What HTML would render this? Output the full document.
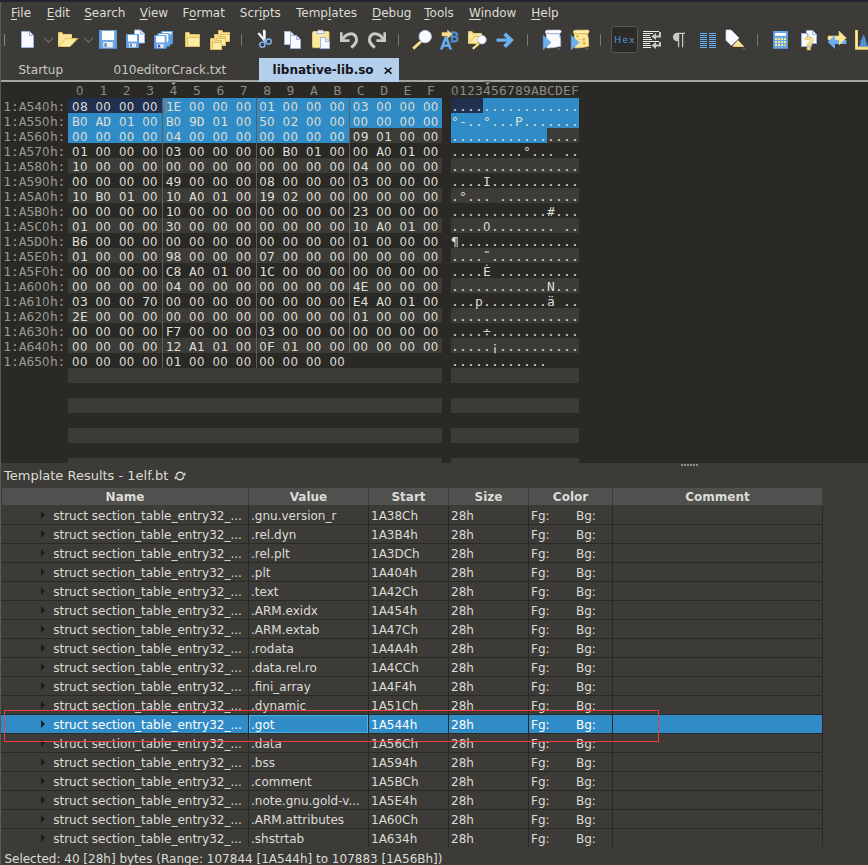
<!DOCTYPE html>
<html lang="en">
<head>
<meta charset="utf-8">
<title>010 Editor - libnative-lib.so</title>
<style>
html,body{margin:0;padding:0;}
body{width:868px;height:865px;overflow:hidden;background:#3c3b37;position:relative;
 font-family:"DejaVu Sans","Liberation Sans",sans-serif;font-size:12px;color:#dcdcd6;}
*{box-sizing:border-box;}
.abs{position:absolute;}
#topstrip{position:absolute;left:0;top:0;width:868px;height:2px;background:#22252f;}
#leftb{position:absolute;left:0;top:2px;width:1px;height:863px;background:#5c5b58;}
/* menu */
#menu{position:absolute;left:0;top:2px;height:22px;white-space:nowrap;}
#menu span{position:absolute;top:0;line-height:22px;height:22px;color:#dddcd6;}
#menu u{text-decoration:underline;text-underline-offset:2px;text-decoration-thickness:1px;}
/* toolbar */
#tb{position:absolute;left:0;top:25px;width:868px;height:30px;}
#tb svg{position:absolute;overflow:visible;}
.sep{position:absolute;top:9px;width:1px;height:13px;background:#6a6966;}
/* tabs */
#tabs{position:absolute;left:0;top:58px;width:868px;height:24px;}
.tab{position:absolute;top:0;height:24px;line-height:24px;color:#c9c8c2;white-space:nowrap;}
#tabline{position:absolute;left:1px;top:80px;width:867px;height:2px;background:#a6a6a5;}
#acttab{position:absolute;left:259px;top:58px;width:140px;height:24px;background:#b4cfec;color:#15151a;font-weight:bold;}
#acttab span{position:absolute;left:13.6px;top:0;line-height:24px;}
#acttab svg{position:absolute;left:125px;top:9px;}
/* hex */
#hexbg{position:absolute;left:1px;top:82px;width:867px;height:381px;background:#2a2926;}
.stripe{position:absolute;height:15px;background:#3c3b37;}
.mono{font-family:"DejaVu Sans Mono","Liberation Mono",monospace;font-size:13px;}
.addr,.hx,.as,.hh{position:absolute;height:15px;line-height:15px;white-space:pre;font-family:"DejaVu Sans Mono","Liberation Mono",monospace;font-size:13px;}
.addr{left:3.3px;color:#9a9a92;line-height:17px;letter-spacing:-0.08px;}
.hx{left:72.1px;color:#deddd5;word-spacing:-0.08px;line-height:17px;}
.as{left:451.1px;color:#deddd5;letter-spacing:0.17px;line-height:17px;}
.hx i{display:inline-block;width:23.4px;font-style:normal;}
.addr b,.hx b,.hh b,.as b{font-weight:normal;font-family:"DejaVu Sans Condensed","DejaVu Sans Mono","Liberation Mono",monospace;letter-spacing:0.39px;}
.as b{letter-spacing:0.56px !important;}
.hh{top:83px;color:#8c8b80;line-height:15px !important;}
.vs{position:absolute;top:98px;width:1px;background:#5e5d5a;height:270px;}
.selb{position:absolute;background:#308cc6;height:15px;}
.navy{position:absolute;background:#22304f;height:15px;}
/* template results */
#tr{position:absolute;left:4px;top:467px;font-size:13px;line-height:18px;color:#dcdbd5;white-space:nowrap;}
#th{position:absolute;left:2px;top:488px;width:820px;height:17px;background:#50504e;}
#th span{position:absolute;top:0;height:17px;line-height:19px;text-align:center;font-weight:bold;color:#dcdbd5;}
#th i{position:absolute;top:0;width:1px;height:17px;background:#3c3b37;}
.tr{position:absolute;left:1px;width:821px;height:19px;border-bottom:1px solid #2a2926;}
.tr.last{border-bottom:none;height:18px;overflow:hidden;}
.tr.sel{background:#308cc6;}
.tr .c{position:absolute;top:0;height:19px;line-height:20px;white-space:nowrap;color:#dddcd6;}
.tr.sel .c{color:#fff;}
.c.n{left:52.2px;} .c.v{left:250px;} .c.s{left:370px;} .c.z{left:450px;} .c.f{left:530px;} .c.b{left:575px;}
.ar{position:absolute;left:40px;top:5px;width:0;height:0;border-left:4px solid #1c1c1a;border-top:4px solid transparent;border-bottom:4px solid transparent;}
.vl{position:absolute;top:506px;width:1px;height:341px;background:#2a2926;}
#status{position:absolute;left:4.4px;top:851px;line-height:16px;color:#dcdbd5;white-space:nowrap;}
#redbox{position:absolute;left:4px;top:710px;width:655px;height:32px;border:1px solid #f03c3c;}
</style>
</head>
<body>
<div id="topstrip"></div>
<div id="leftb"></div>
<div id="menu"><span style="left:11px"><u>F</u>ile</span><span style="left:46.8px"><u>E</u>dit</span><span style="left:84.2px"><u>S</u>earch</span><span style="left:139.7px"><u>V</u>iew</span><span style="left:182.6px">F<u>o</u>rmat</span><span style="left:239.8px">Scr<u>i</u>pts</span><span style="left:296px">Temp<u>l</u>ates</span><span style="left:371.9px"><u>D</u>ebug</span><span style="left:424.3px"><u>T</u>ools</span><span style="left:469.1px"><u>W</u>indow</span><span style="left:531.3px"><u>H</u>elp</span></div>
<div id="tb">
<svg style="left:0;top:0" width="868" height="30" viewBox="0 25 868 30">
<defs>
<g id="doc"><path d="M0.5 0.5 H8.5 L12.5 4.5 V16.5 H0.5 Z" fill="#f8faff" stroke="#9db2df" stroke-width="1"/><path d="M8.5 0.5 V4.5 H12.5" fill="#dfe7fa" stroke="#9db2df" stroke-width="1"/></g>
<g id="sdoc"><path d="M0.5 0.5 H6.5 L10.5 4.5 V13.5 H0.5 Z" fill="#f8faff" stroke="#9db2df" stroke-width="1"/><path d="M6.5 0.5 V4.5 H10.5" fill="#e3eafb" stroke="#9db2df" stroke-width="1"/></g>
<g id="chev"><path d="M0.5 0.5 L5 5 L9.5 0.5" fill="none" stroke="#73726f" stroke-width="1.1"/></g>
<g id="floppy"><rect x="0" y="0" width="13" height="14" rx="1.2" fill="#6ba6e6"/><rect x="0" y="0" width="1.2" height="14" fill="#5a97dc"/><rect x="11.8" y="0" width="1.2" height="14" fill="#5a97dc"/><rect x="2" y="1" width="9" height="6.5" fill="#ffffff"/><rect x="3" y="9.5" width="7" height="3.7" fill="#ece8e4"/><rect x="4" y="10.2" width="2" height="2.5" fill="#4a80d8"/></g>
<g id="sfold"><path d="M0.5 11.5 V0.5 H4 L5 2.5 H11.5 V11.5 Z" fill="#f6df8c" stroke="#e3be5c" stroke-width="1"/><rect x="2.5" y="4.5" width="9" height="7" fill="#faedaa" stroke="#e3be5c" stroke-width="1"/></g>
<g id="dd"><path d="M0 0 H4.2 L2.1 1.7 Z" fill="#64635f"/></g>
</defs>
<!-- handle -->
<rect x="4" y="34" width="1" height="12" fill="#8b8a88"/>
<!-- new -->
<use href="#doc" x="21" y="31"/>
<use href="#chev" x="43.6" y="37.2"/>
<!-- open folder -->
<path d="M58.5 46.5 V32.5 H62 L63.2 34.5 H71.5 V38" fill="#f6df8c" stroke="#e3be5c" stroke-width="1"/>
<path d="M58.5 46.5 V34.5 H71.5 V38.5 H66 Z" fill="#f8e596"/>
<path d="M58.5 46.5 L66 38.5 H77.8 L70 46.5 Z" fill="#faeba4" stroke="#e3be5c" stroke-width="1" stroke-linejoin="round"/>
<use href="#chev" x="83.5" y="37.2"/>
<!-- save -->
<rect x="99" y="30" width="18" height="18.8" rx="1.5" fill="#6ba6e6"/>
<rect x="99" y="30" width="1.5" height="18.8" fill="#5a97dc"/><rect x="115.5" y="30" width="1.5" height="18.8" fill="#5a97dc"/>
<rect x="102" y="31" width="12.2" height="9" fill="#ffffff"/>
<rect x="103.2" y="42" width="9.6" height="5.5" fill="#eeeae6"/>
<rect x="104.3" y="43" width="2.5" height="4" fill="#5b97e0"/>
<!-- save as -->
<use href="#sdoc" x="134" y="29.5"/>
<use href="#floppy" x="126" y="34"/>
<!-- save all -->
<g><rect x="161" y="31" width="12" height="13" rx="1" fill="#6ba6e6"/><rect x="162.5" y="32" width="9" height="8" fill="#fff"/>
<rect x="157.5" y="33" width="12.5" height="13.5" rx="1" fill="#6ba6e6"/><rect x="159" y="34" width="9.2" height="8" fill="#fff"/><path d="M167 47.5 L173 43 V33 L170 35 V46 Z" fill="#5a97dc"/>
<g transform="translate(154.2,35)"><rect x="0" y="0" width="12.5" height="13.7" rx="1.2" fill="#6ba6e6"/><rect x="0" y="0" width="1.2" height="13.7" fill="#5a97dc"/><rect x="2" y="1" width="8.5" height="6.5" fill="#ffffff"/><rect x="3" y="9.2" width="6.5" height="3.5" fill="#ece8e4"/><rect x="3.8" y="9.8" width="2.2" height="2.5" fill="#3a50d0"/></g></g>
<!-- closed folder -->
<path d="M185.5 46.5 V32.5 H189 L190 34.5 H199.5 V46.5 Z" fill="#f6df8c" stroke="#e3be5c" stroke-width="1"/>
<rect x="187.5" y="37.5" width="12" height="9" fill="#faedaa" stroke="#e3be5c" stroke-width="1"/>
<!-- multi folder -->
<use href="#sfold" x="218" y="30"/>
<use href="#sfold" x="214" y="34"/>
<use href="#sfold" x="210" y="38"/>
<rect x="241" y="34" width="1" height="12" fill="#7b7a78"/>
<!-- scissors -->
<path d="M257.3 33.6 L259.6 32.6 L266.4 41 L264.6 42.3 Z" fill="#f4f7ff"/>
<path d="M262.8 30.2 L264.5 29.5 L265.8 31 L265.6 41 L263.4 41 Z" fill="#f4f7ff"/>
<path d="M263.6 39 L266.5 39.5 L267.2 42 L264.5 42.6 Z" fill="#9db6dc"/>
<circle cx="262.4" cy="44.7" r="2.6" fill="none" stroke="#7db8f0" stroke-width="1.4"/>
<circle cx="268.7" cy="41.6" r="2.6" fill="none" stroke="#7db8f0" stroke-width="1.4"/>
<!-- copy -->
<use href="#sdoc" x="284" y="31"/>
<use href="#sdoc" x="290" y="35"/>
<!-- paste -->
<rect x="312.5" y="31.5" width="16.5" height="16.2" rx="1.2" fill="#f9e9a0" stroke="#e9c868" stroke-width="1"/>
<path d="M316.5 33.5 L318 30.3 H323 L324.5 33.5 Z" fill="#f4f7ff" stroke="#9db2df" stroke-width="0.9"/>
<g transform="translate(320,37)"><path d="M0.5 0.5 H5.5 L9.5 4.5 V11.6 H0.5 Z" fill="#f8faff" stroke="#9db2df" stroke-width="1"/><path d="M5.5 0.5 V4.5 H9.5" fill="#e3eafb" stroke="#9db2df" stroke-width="1"/></g>
<!-- undo -->
<path d="M341.3 32.3 V40.6 H349.6" fill="none" stroke="#c9c9c7" stroke-width="2.6"/>
<path d="M342.5 39.5 C346 33 353.5 32 356 37 C357.8 41 354.5 45 351.2 47.6" fill="none" stroke="#c9c9c7" stroke-width="3"/>
<!-- redo -->
<path d="M384.7 32.3 V40.6 H376.4" fill="none" stroke="#c9c9c7" stroke-width="2.6"/>
<path d="M383.5 39.5 C380 33 372.5 32 370 37 C368.2 41 371.5 45 374.8 47.6" fill="none" stroke="#c9c9c7" stroke-width="3"/>
<rect x="398" y="34" width="1" height="12" fill="#7b7a78"/>
<!-- find -->
<path d="M413.2 48.6 L421 41.5" stroke="#f7df88" stroke-width="2.8" stroke-linecap="butt"/>
<circle cx="425.2" cy="36.6" r="6.2" fill="#fafbff" stroke="#b9c8ea" stroke-width="1"/>
<!-- replace -->
<text x="440.6" y="48.9" font-family="'DejaVu Sans','Liberation Sans',sans-serif" font-size="16.2" fill="#6bb0f0" stroke="#6bb0f0" stroke-width="0.8">A</text>
<text x="450.1" y="41.8" font-family="'DejaVu Sans','Liberation Sans',sans-serif" font-size="13.2" fill="#4f8fd0" stroke="#4f8fd0" stroke-width="0.8">B</text>
<path d="M442 32.6 H447.5 V30 L452.2 34.3 L447.5 38.6 V36 H442 Z" fill="#f9e08a" stroke="#e9c868" stroke-width="0.5"/>
<!-- find in files -->
<path d="M468.5 43.5 V31.5 H472 L473.2 33.5 H481.5 V36" fill="#f6df8c" stroke="#e3be5c" stroke-width="1"/>
<path d="M468.5 43.5 V33.5 H481.5 V37 H475 Z" fill="#f8e596"/>
<path d="M468.5 43.5 L474.5 36.5 H483 L477 43.5 Z" fill="#faeba4" stroke="#e3be5c" stroke-width="1" stroke-linejoin="round"/>
<path d="M472.8 48.8 L479 43.4" stroke="#f7df88" stroke-width="2.2"/>
<circle cx="482" cy="39.7" r="4.2" fill="#fafbff" stroke="#b9c8ea" stroke-width="1"/>
<!-- goto -->
<path d="M497.8 40.1 H510" stroke="#6bb0f0" stroke-width="3.2" stroke-linecap="round"/>
<path d="M504.6 33.8 L511.2 40.1 L504.6 46.6" fill="none" stroke="#6bb0f0" stroke-width="3.8" stroke-linejoin="miter"/>
<rect x="527" y="34" width="1" height="12" fill="#7b7a78"/>
<!-- run script -->
<g id="scrollw">
<path d="M546.5 33 L546.3 40 Q546.2 45 546.9 48 Q553.5 47.9 560.6 46.3 Q561 40 559.4 33.3 Z" fill="#fafbff" stroke="#c3cfec" stroke-width="0.7"/>
<path d="M547 30.2 Q545.3 30.4 545.3 32 Q545.4 33.7 547.2 33.7 L559.4 33.7 Q560.6 33.3 561.3 31.2 Q560.6 30.1 559.4 30.1 Z" fill="#ffffff" stroke="#d5def4" stroke-width="0.6"/>
<path d="M547.3 32 Q547.5 33.6 549 33.7 L559.4 33.7" fill="none" stroke="#8fa6d6" stroke-width="0.9"/>
<path d="M559.6 34 Q561 40 560.6 46" fill="none" stroke="#9fb3e0" stroke-width="0.8"/>
</g>
<path d="M543.1 35 L551 42.5 L543.1 50.1 Z" fill="#6cb0ee" stroke="#4f8fd4" stroke-width="0.5"/>
<use href="#dd" x="556.8" y="48.2"/>
<!-- run template -->
<g>
<path d="M574.5 33 L574.3 40 Q574.2 45 574.9 48 Q581.5 47.9 588.6 46.3 Q589 40 587.4 33.3 Z" fill="#fbeaa2" stroke="#ecc968" stroke-width="0.8"/>
<path d="M575 30.2 Q573.3 30.4 573.3 32 Q573.4 33.7 575.2 33.7 L587.4 33.7 Q588.6 33.3 589.3 31.2 Q588.6 30.1 587.4 30.1 Z" fill="#fdf0b6" stroke="#ecc968" stroke-width="0.7"/>
<path d="M575.3 32 Q575.5 33.6 577 33.7 L587.4 33.7" fill="none" stroke="#e3b94e" stroke-width="0.9"/>
</g>
<g fill="#e5b040"><circle cx="577.3" cy="36.3" r="1.25"/><circle cx="583.7" cy="39.4" r="1.35"/><circle cx="584.4" cy="43.2" r="1.35"/><circle cx="578.8" cy="39.4" r="0.5"/><circle cx="580.6" cy="39.4" r="0.5"/><circle cx="579.8" cy="41.4" r="0.5"/><circle cx="580.8" cy="43.3" r="0.5"/><circle cx="582.2" cy="43.3" r="0.5"/></g>
<path d="M571.1 35 L579 42.5 L571.1 50.1 Z" fill="#6cb0ee" stroke="#4f8fd4" stroke-width="0.5"/>
<use href="#dd" x="584.8" y="48.2"/>
<rect x="600" y="34" width="1" height="12" fill="#7b7a78"/>
<!-- hex button -->
<rect x="611.5" y="26.5" width="26" height="26" rx="3" fill="#2c2b28" stroke="#5a5955" stroke-width="1"/>
<text x="614" y="43.1" font-family="'DejaVu Sans','Liberation Sans',sans-serif" font-size="9.5" letter-spacing="1.1" fill="#5593cf">Hex</text>
<!-- word wrap -->
<g fill="#ecebe8">
<rect x="643" y="31" width="16" height="1"/><rect x="643" y="33" width="10" height="1"/><rect x="643" y="35" width="7" height="1"/><rect x="643" y="37" width="8" height="1"/><rect x="643" y="39" width="9" height="1"/>
<rect x="643" y="41" width="16" height="1"/><rect x="643" y="43" width="7" height="1"/><rect x="643" y="45" width="8" height="1"/><rect x="643" y="47" width="8" height="1"/>
</g>
<g fill="#c9c9c7">
<path d="M659 32 H661 V37.4 H655.5 V35.6 H659 Z"/><path d="M651.5 36.5 L656 33 V40 Z"/>
<path d="M659 42 H661 V46.4 H655.5 V44.6 H659 Z"/><path d="M651.5 45.5 L656 42 V49 Z"/>
</g>
<!-- pilcrow -->
<path d="M685 32.7 H677.2 A4.3 4.3 0 0 0 677.2 41.3 H678 V47.2 H679.2 V33.9 H682 V47.2 H683.2 V33.9 H685 Z" fill="#c9c9c7"/>
<!-- columns -->
<g fill="#6bb0f0">
<rect x="700" y="33" width="7" height="1"/><rect x="700" y="35" width="7" height="1"/><rect x="700" y="37" width="7" height="1"/><rect x="700" y="39" width="7" height="1"/><rect x="700" y="41" width="7" height="1"/><rect x="700" y="43" width="7" height="1"/><rect x="700" y="45" width="7" height="1"/><rect x="700" y="47" width="7" height="1"/>
<rect x="709" y="33" width="7" height="1"/><rect x="709" y="35" width="7" height="1"/><rect x="709" y="37" width="7" height="1"/><rect x="709" y="39" width="7" height="1"/><rect x="709" y="41" width="7" height="1"/><rect x="709" y="43" width="7" height="1"/><rect x="709" y="45" width="7" height="1"/><rect x="709" y="47" width="7" height="1"/>
</g>
<!-- highlighter -->
<path d="M726 30 H731 L739 38 L731.5 45.6 L726 40.4 Z" fill="#f8faff" stroke="#dfe6f8" stroke-width="0.6"/>
<path d="M738 40 L744.2 46.8 H733.2 L732.6 46 Z" fill="#f9e596"/><path d="M733 46 H744 V47 H733 Z" fill="#eec666"/>
<use href="#dd" x="742" y="48.2"/>
<rect x="757" y="34" width="1" height="12" fill="#7b7a78"/>
<!-- calculator -->
<rect x="773" y="31" width="14.8" height="17.8" rx="1.6" fill="#6ba6e6"/><rect x="773" y="31" width="1.3" height="17.8" fill="#5a97dc"/><rect x="786.5" y="31" width="1.3" height="17.8" fill="#5a97dc"/>
<rect x="775" y="33" width="11" height="2.8" fill="#ffffff"/>
<g fill="#fbe98e"><rect x="775" y="38" width="2" height="2"/><rect x="778" y="38" width="2" height="2"/><rect x="781" y="38" width="2" height="2"/><rect x="784" y="38" width="2" height="2"/>
<rect x="775" y="41" width="2" height="2"/><rect x="778" y="41" width="2" height="2"/><rect x="781" y="41" width="2" height="2"/><rect x="784" y="41" width="2" height="2"/>
<rect x="775" y="44" width="2" height="2"/><rect x="778" y="44" width="2" height="2"/><rect x="781" y="44" width="2" height="2"/><rect x="784" y="44" width="2" height="2" fill="#e6c45c"/></g>
<!-- compare -->
<use href="#sdoc" x="806" y="30"/>
<use href="#sdoc" x="801" y="33"/>
<text x="804" y="49.9" font-family="'DejaVu Sans','Liberation Sans',sans-serif" font-weight="bold" font-size="18.3" fill="#f5df8a" stroke="#e6c462" stroke-width="0.5">?</text>
<!-- convert -->
<rect x="835" y="40" width="11.3" height="4" fill="#6bb0f0"/>
<path d="M828 36 H839 V31 L846.3 38 L839 45 V40 H828 Z" fill="#fae79a" stroke="#eec666" stroke-width="0.6"/>
<path d="M835 35 L827.8 42 L835 49 Z" fill="#6bb0f0"/><rect x="834.5" y="40" width="4" height="4" fill="#6bb0f0"/>
<!-- histogram -->
<path d="M858.2 47 L860.5 44 L863 35.2 H864.2 L866.5 44 L868 46 V47 Z" fill="#5f9fe0"/>
<g fill="#4580c6"><rect x="860" y="40" width="0.7" height="7"/><rect x="861.6" y="38" width="0.7" height="9"/><rect x="863.2" y="35" width="0.7" height="12"/><rect x="864.8" y="38" width="0.7" height="9"/><rect x="866.4" y="42" width="0.7" height="5"/></g>
<path d="M856.5 30 V48.3 H868" fill="none" stroke="#f2d276" stroke-width="3"/><path d="M856.5 30.5 V48.3 H868" fill="none" stroke="#fbe9a6" stroke-width="1"/>
</svg>

</div>
<div id="tabline"></div>
<div id="acttab"><span>libnative-lib.so</span><svg width="8" height="8" viewBox="0 0 8 8"><path d="M0.7 0.7 L7.5 6.6 M7.5 0.7 L0.7 6.6" stroke="#0c0c10" stroke-width="1.5" fill="none"/></svg></div>
<div id="tabs">
<div class="tab" style="left:18.5px">Startup</div>
<div class="tab" style="left:113.5px">010editorCrack.txt</div>
</div>
<div id="hexbg"></div>
<div class="stripe" style="left:68px;top:98px;width:374px;height:15px"></div><div class="stripe" style="left:451px;top:98px;width:128px;height:15px"></div>
<div class="stripe" style="left:68px;top:128px;width:374px;height:15px"></div><div class="stripe" style="left:451px;top:128px;width:128px;height:15px"></div>
<div class="stripe" style="left:68px;top:158px;width:374px;height:15px"></div><div class="stripe" style="left:451px;top:158px;width:128px;height:15px"></div>
<div class="stripe" style="left:68px;top:188px;width:374px;height:15px"></div><div class="stripe" style="left:451px;top:188px;width:128px;height:15px"></div>
<div class="stripe" style="left:68px;top:218px;width:374px;height:15px"></div><div class="stripe" style="left:451px;top:218px;width:128px;height:15px"></div>
<div class="stripe" style="left:68px;top:248px;width:374px;height:15px"></div><div class="stripe" style="left:451px;top:248px;width:128px;height:15px"></div>
<div class="stripe" style="left:68px;top:278px;width:374px;height:15px"></div><div class="stripe" style="left:451px;top:278px;width:128px;height:15px"></div>
<div class="stripe" style="left:68px;top:308px;width:374px;height:15px"></div><div class="stripe" style="left:451px;top:308px;width:128px;height:15px"></div>
<div class="stripe" style="left:68px;top:338px;width:374px;height:15px"></div><div class="stripe" style="left:451px;top:338px;width:128px;height:15px"></div>
<div class="stripe" style="left:68px;top:368px;width:374px;height:15px"></div><div class="stripe" style="left:451px;top:368px;width:128px;height:15px"></div>
<div class="stripe" style="left:68px;top:398px;width:374px;height:15px"></div><div class="stripe" style="left:451px;top:398px;width:128px;height:15px"></div>
<div class="stripe" style="left:68px;top:428px;width:374px;height:15px"></div><div class="stripe" style="left:451px;top:428px;width:128px;height:15px"></div>
<div class="stripe" style="left:68px;top:458px;width:374px;height:5px"></div><div class="stripe" style="left:451px;top:458px;width:128px;height:5px"></div>
<div class="navy" style="left:68px;top:98px;width:94px"></div><div class="selb" style="left:163px;top:98px;width:279px"></div>
<div class="selb" style="left:68px;top:113px;width:374px"></div>
<div class="selb" style="left:68px;top:128px;width:281px"></div>
<div class="navy" style="left:451px;top:98px;width:32px"></div><div class="selb" style="left:483px;top:98px;width:96px"></div>
<div class="selb" style="left:451px;top:113px;width:128px"></div>
<div class="selb" style="left:451px;top:128px;width:96px"></div>
<div class="hh" style="left:76.0px"><b>0</b></div><div class="hh" style="left:99.4px">1</div><div class="hh" style="left:122.8px">2</div><div class="hh" style="left:146.2px">3</div><div class="hh" style="left:169.6px">4</div><div class="hh" style="left:193.0px">5</div><div class="hh" style="left:216.4px">6</div><div class="hh" style="left:239.8px">7</div><div class="hh" style="left:263.2px">8</div><div class="hh" style="left:286.6px">9</div><div class="hh" style="left:310.0px">A</div><div class="hh" style="left:333.4px">B</div><div class="hh" style="left:356.8px">C</div><div class="hh" style="left:380.2px">D</div><div class="hh" style="left:403.6px">E</div><div class="hh" style="left:427.0px">F</div>
<div class="hh as" style="left:451.1px;color:#8c8b80"><b>0</b>123456789ABCDEF</div>

<div class="addr" style="top:98px">1:A54<b>0</b>h:</div>
<div class="hx" style="top:98px"><i><b>0</b>8</i><i><b>00</b></i><i><b>00</b></i><i><b>00</b></i><i>1E</i><i><b>00</b></i><i><b>00</b></i><i><b>00</b></i><i><b>0</b>1</i><i><b>00</b></i><i><b>00</b></i><i><b>00</b></i><i><b>0</b>3</i><i><b>00</b></i><i><b>00</b></i><i><b>00</b></i></div>
<div class="as" style="top:98px">................</div>
<div class="addr" style="top:113px">1:A55<b>0</b>h:</div>
<div class="hx" style="top:113px"><i>B<b>0</b></i><i>AD</i><i><b>0</b>1</i><i><b>00</b></i><i>B<b>0</b></i><i>9D</i><i><b>0</b>1</i><i><b>00</b></i><i>5<b>0</b></i><i><b>0</b>2</i><i><b>00</b></i><i><b>00</b></i><i><b>00</b></i><i><b>00</b></i><i><b>00</b></i><i><b>00</b></i></div>
<div class="as" style="top:113px">°-..°...P.......</div>
<div class="addr" style="top:128px">1:A56<b>0</b>h:</div>
<div class="hx" style="top:128px"><i><b>00</b></i><i><b>00</b></i><i><b>00</b></i><i><b>00</b></i><i><b>0</b>4</i><i><b>00</b></i><i><b>00</b></i><i><b>00</b></i><i><b>00</b></i><i><b>00</b></i><i><b>00</b></i><i><b>00</b></i><i><b>0</b>9</i><i><b>0</b>1</i><i><b>00</b></i><i><b>00</b></i></div>
<div class="as" style="top:128px">................</div>
<div class="addr" style="top:143px">1:A57<b>0</b>h:</div>
<div class="hx" style="top:143px"><i><b>0</b>1</i><i><b>00</b></i><i><b>00</b></i><i><b>00</b></i><i><b>0</b>3</i><i><b>00</b></i><i><b>00</b></i><i><b>00</b></i><i><b>00</b></i><i>B<b>0</b></i><i><b>0</b>1</i><i><b>00</b></i><i><b>00</b></i><i>A<b>0</b></i><i><b>0</b>1</i><i><b>00</b></i></div>
<div class="as" style="top:143px">.........°...&nbsp;..</div>
<div class="addr" style="top:158px">1:A58<b>0</b>h:</div>
<div class="hx" style="top:158px"><i>1<b>0</b></i><i><b>00</b></i><i><b>00</b></i><i><b>00</b></i><i><b>00</b></i><i><b>00</b></i><i><b>00</b></i><i><b>00</b></i><i><b>00</b></i><i><b>00</b></i><i><b>00</b></i><i><b>00</b></i><i><b>0</b>4</i><i><b>00</b></i><i><b>00</b></i><i><b>00</b></i></div>
<div class="as" style="top:158px">................</div>
<div class="addr" style="top:173px">1:A59<b>0</b>h:</div>
<div class="hx" style="top:173px"><i><b>00</b></i><i><b>00</b></i><i><b>00</b></i><i><b>00</b></i><i>49</i><i><b>00</b></i><i><b>00</b></i><i><b>00</b></i><i><b>0</b>8</i><i><b>00</b></i><i><b>00</b></i><i><b>00</b></i><i><b>0</b>3</i><i><b>00</b></i><i><b>00</b></i><i><b>00</b></i></div>
<div class="as" style="top:173px">....I...........</div>
<div class="addr" style="top:188px">1:A5A<b>0</b>h:</div>
<div class="hx" style="top:188px"><i>1<b>0</b></i><i>B<b>0</b></i><i><b>0</b>1</i><i><b>00</b></i><i>1<b>0</b></i><i>A<b>0</b></i><i><b>0</b>1</i><i><b>00</b></i><i>19</i><i><b>0</b>2</i><i><b>00</b></i><i><b>00</b></i><i><b>00</b></i><i><b>00</b></i><i><b>00</b></i><i><b>00</b></i></div>
<div class="as" style="top:188px">.°...&nbsp;..........</div>
<div class="addr" style="top:203px">1:A5B<b>0</b>h:</div>
<div class="hx" style="top:203px"><i><b>00</b></i><i><b>00</b></i><i><b>00</b></i><i><b>00</b></i><i>1<b>0</b></i><i><b>00</b></i><i><b>00</b></i><i><b>00</b></i><i><b>00</b></i><i><b>00</b></i><i><b>00</b></i><i><b>00</b></i><i>23</i><i><b>00</b></i><i><b>00</b></i><i><b>00</b></i></div>
<div class="as" style="top:203px">............#...</div>
<div class="addr" style="top:218px">1:A5C<b>0</b>h:</div>
<div class="hx" style="top:218px"><i><b>0</b>1</i><i><b>00</b></i><i><b>00</b></i><i><b>00</b></i><i>3<b>0</b></i><i><b>00</b></i><i><b>00</b></i><i><b>00</b></i><i><b>00</b></i><i><b>00</b></i><i><b>00</b></i><i><b>00</b></i><i>1<b>0</b></i><i>A<b>0</b></i><i><b>0</b>1</i><i><b>00</b></i></div>
<div class="as" style="top:218px">....<b>0</b>........&nbsp;..</div>
<div class="addr" style="top:233px">1:A5D<b>0</b>h:</div>
<div class="hx" style="top:233px"><i>B6</i><i><b>00</b></i><i><b>00</b></i><i><b>00</b></i><i><b>00</b></i><i><b>00</b></i><i><b>00</b></i><i><b>00</b></i><i><b>00</b></i><i><b>00</b></i><i><b>00</b></i><i><b>00</b></i><i><b>0</b>1</i><i><b>00</b></i><i><b>00</b></i><i><b>00</b></i></div>
<div class="as" style="top:233px">¶...............</div>
<div class="addr" style="top:248px">1:A5E<b>0</b>h:</div>
<div class="hx" style="top:248px"><i><b>0</b>1</i><i><b>00</b></i><i><b>00</b></i><i><b>00</b></i><i>98</i><i><b>00</b></i><i><b>00</b></i><i><b>00</b></i><i><b>0</b>7</i><i><b>00</b></i><i><b>00</b></i><i><b>00</b></i><i><b>00</b></i><i><b>00</b></i><i><b>00</b></i><i><b>00</b></i></div>
<div class="as" style="top:248px">....˜...........</div>
<div class="addr" style="top:263px">1:A5F<b>0</b>h:</div>
<div class="hx" style="top:263px"><i><b>00</b></i><i><b>00</b></i><i><b>00</b></i><i><b>00</b></i><i>C8</i><i>A<b>0</b></i><i><b>0</b>1</i><i><b>00</b></i><i>1C</i><i><b>00</b></i><i><b>00</b></i><i><b>00</b></i><i><b>00</b></i><i><b>00</b></i><i><b>00</b></i><i><b>00</b></i></div>
<div class="as" style="top:263px">....È&nbsp;..........</div>
<div class="addr" style="top:278px">1:A6<b>00</b>h:</div>
<div class="hx" style="top:278px"><i><b>00</b></i><i><b>00</b></i><i><b>00</b></i><i><b>00</b></i><i><b>0</b>4</i><i><b>00</b></i><i><b>00</b></i><i><b>00</b></i><i><b>00</b></i><i><b>00</b></i><i><b>00</b></i><i><b>00</b></i><i>4E</i><i><b>00</b></i><i><b>00</b></i><i><b>00</b></i></div>
<div class="as" style="top:278px">............N...</div>
<div class="addr" style="top:293px">1:A61<b>0</b>h:</div>
<div class="hx" style="top:293px"><i><b>0</b>3</i><i><b>00</b></i><i><b>00</b></i><i>7<b>0</b></i><i><b>00</b></i><i><b>00</b></i><i><b>00</b></i><i><b>00</b></i><i><b>00</b></i><i><b>00</b></i><i><b>00</b></i><i><b>00</b></i><i>E4</i><i>A<b>0</b></i><i><b>0</b>1</i><i><b>00</b></i></div>
<div class="as" style="top:293px">...p........ä&nbsp;..</div>
<div class="addr" style="top:308px">1:A62<b>0</b>h:</div>
<div class="hx" style="top:308px"><i>2E</i><i><b>00</b></i><i><b>00</b></i><i><b>00</b></i><i><b>00</b></i><i><b>00</b></i><i><b>00</b></i><i><b>00</b></i><i><b>00</b></i><i><b>00</b></i><i><b>00</b></i><i><b>00</b></i><i><b>0</b>1</i><i><b>00</b></i><i><b>00</b></i><i><b>00</b></i></div>
<div class="as" style="top:308px">................</div>
<div class="addr" style="top:323px">1:A63<b>0</b>h:</div>
<div class="hx" style="top:323px"><i><b>00</b></i><i><b>00</b></i><i><b>00</b></i><i><b>00</b></i><i>F7</i><i><b>00</b></i><i><b>00</b></i><i><b>00</b></i><i><b>0</b>3</i><i><b>00</b></i><i><b>00</b></i><i><b>00</b></i><i><b>00</b></i><i><b>00</b></i><i><b>00</b></i><i><b>00</b></i></div>
<div class="as" style="top:323px">....÷...........</div>
<div class="addr" style="top:338px">1:A64<b>0</b>h:</div>
<div class="hx" style="top:338px"><i><b>00</b></i><i><b>00</b></i><i><b>00</b></i><i><b>00</b></i><i>12</i><i>A1</i><i><b>0</b>1</i><i><b>00</b></i><i><b>0</b>F</i><i><b>0</b>1</i><i><b>00</b></i><i><b>00</b></i><i><b>00</b></i><i><b>00</b></i><i><b>00</b></i><i><b>00</b></i></div>
<div class="as" style="top:338px">.....¡..........</div>
<div class="addr" style="top:353px">1:A65<b>0</b>h:</div>
<div class="hx" style="top:353px"><i><b>00</b></i><i><b>00</b></i><i><b>00</b></i><i><b>00</b></i><i><b>0</b>1</i><i><b>00</b></i><i><b>00</b></i><i><b>00</b></i><i><b>00</b></i><i><b>00</b></i><i><b>00</b></i><i><b>00</b></i></div>
<div class="as" style="top:353px">............</div>
<div class="vs" style="left:162px"></div>
<div class="vs" style="left:256px"></div>
<div class="vs" style="left:349px;height:255px"></div>
<div class="abs" style="left:165px;top:99px;width:2px;height:14px;background:#808080"></div>
<svg class="abs" style="left:160px;top:80px" width="340" height="8" viewBox="160 80 340 8"><path d="M170.2 82 H176.8 L173.5 85.4 Z" fill="#9c9c9c" stroke="#1c1b19" stroke-width="0.7"/><path d="M484.2 82 H490.8 L487.5 85.4 Z" fill="#9c9c9c" stroke="#1c1b19" stroke-width="0.7"/></svg>
<svg class="abs" style="left:680px;top:463px" width="20" height="4" viewBox="680 463 20 4"><g fill="#8f8f8d"><rect x="681" y="464" width="2" height="2"/><rect x="684" y="464" width="2" height="2"/><rect x="687" y="464" width="2" height="2"/><rect x="690" y="464" width="2" height="2"/><rect x="693" y="464" width="2" height="2"/><rect x="696" y="464" width="2" height="2"/></g></svg>
<div id="tr">Template Results - 1elf.bt</div>
<svg class="abs" style="left:173px;top:470px" width="14" height="12" viewBox="173 470 14 12"><g fill="none" stroke="#dddcda" stroke-width="1.3"><path d="M176.3 475.6 A3.8 3.8 0 0 1 183.2 473.9"/><path d="M183.7 476.4 A3.8 3.8 0 0 1 176.8 478.1"/></g><path d="M185.3 472.2 V475.6 H181.8 Z" fill="#dddcda"/><path d="M174.7 479.8 V476.4 H178.2 Z" fill="#dddcda"/></svg>
<div id="th"><span style="left:0;width:246px">Name</span><i style="left:246px"></i><span style="left:247px;width:119px">Value</span><i style="left:366px"></i><span style="left:367px;width:79px">Start</span><i style="left:446px"></i><span style="left:447px;width:79px">Size</span><i style="left:526px"></i><span style="left:527px;width:83px">Color</span><i style="left:610px"></i><span style="left:611px;width:209px">Comment</span></div>

<div class="tr" style="top:506px"><i class="ar"></i><span class="c n">struct section_table_entry32_...</span><span class="c v">.gnu.version_r</span><span class="c s">1A38Ch</span><span class="c z">28h</span><span class="c f">Fg:</span><span class="c b">Bg:</span></div>
<div class="tr" style="top:525px"><i class="ar"></i><span class="c n">struct section_table_entry32_...</span><span class="c v">.rel.dyn</span><span class="c s">1A3B4h</span><span class="c z">28h</span><span class="c f">Fg:</span><span class="c b">Bg:</span></div>
<div class="tr" style="top:544px"><i class="ar"></i><span class="c n">struct section_table_entry32_...</span><span class="c v">.rel.plt</span><span class="c s">1A3DCh</span><span class="c z">28h</span><span class="c f">Fg:</span><span class="c b">Bg:</span></div>
<div class="tr" style="top:563px"><i class="ar"></i><span class="c n">struct section_table_entry32_...</span><span class="c v">.plt</span><span class="c s">1A404h</span><span class="c z">28h</span><span class="c f">Fg:</span><span class="c b">Bg:</span></div>
<div class="tr" style="top:582px"><i class="ar"></i><span class="c n">struct section_table_entry32_...</span><span class="c v">.text</span><span class="c s">1A42Ch</span><span class="c z">28h</span><span class="c f">Fg:</span><span class="c b">Bg:</span></div>
<div class="tr" style="top:601px"><i class="ar"></i><span class="c n">struct section_table_entry32_...</span><span class="c v">.ARM.exidx</span><span class="c s">1A454h</span><span class="c z">28h</span><span class="c f">Fg:</span><span class="c b">Bg:</span></div>
<div class="tr" style="top:620px"><i class="ar"></i><span class="c n">struct section_table_entry32_...</span><span class="c v">.ARM.extab</span><span class="c s">1A47Ch</span><span class="c z">28h</span><span class="c f">Fg:</span><span class="c b">Bg:</span></div>
<div class="tr" style="top:639px"><i class="ar"></i><span class="c n">struct section_table_entry32_...</span><span class="c v">.rodata</span><span class="c s">1A4A4h</span><span class="c z">28h</span><span class="c f">Fg:</span><span class="c b">Bg:</span></div>
<div class="tr" style="top:658px"><i class="ar"></i><span class="c n">struct section_table_entry32_...</span><span class="c v">.data.rel.ro</span><span class="c s">1A4CCh</span><span class="c z">28h</span><span class="c f">Fg:</span><span class="c b">Bg:</span></div>
<div class="tr" style="top:677px"><i class="ar"></i><span class="c n">struct section_table_entry32_...</span><span class="c v">.fini_array</span><span class="c s">1A4F4h</span><span class="c z">28h</span><span class="c f">Fg:</span><span class="c b">Bg:</span></div>
<div class="tr" style="top:696px"><i class="ar"></i><span class="c n">struct section_table_entry32_...</span><span class="c v">.dynamic</span><span class="c s">1A51Ch</span><span class="c z">28h</span><span class="c f">Fg:</span><span class="c b">Bg:</span></div>
<div class="tr sel" style="top:715px"><i class="ar"></i><span class="c n">struct section_table_entry32_...</span><span class="c v">.got</span><span class="c s">1A544h</span><span class="c z">28h</span><span class="c f">Fg:</span><span class="c b">Bg:</span></div>
<div class="tr" style="top:734px"><i class="ar"></i><span class="c n">struct section_table_entry32_...</span><span class="c v">.data</span><span class="c s">1A56Ch</span><span class="c z">28h</span><span class="c f">Fg:</span><span class="c b">Bg:</span></div>
<div class="tr" style="top:753px"><i class="ar"></i><span class="c n">struct section_table_entry32_...</span><span class="c v">.bss</span><span class="c s">1A594h</span><span class="c z">28h</span><span class="c f">Fg:</span><span class="c b">Bg:</span></div>
<div class="tr" style="top:772px"><i class="ar"></i><span class="c n">struct section_table_entry32_...</span><span class="c v">.comment</span><span class="c s">1A5BCh</span><span class="c z">28h</span><span class="c f">Fg:</span><span class="c b">Bg:</span></div>
<div class="tr" style="top:791px"><i class="ar"></i><span class="c n">struct section_table_entry32_...</span><span class="c v">.note.gnu.gold-v...</span><span class="c s">1A5E4h</span><span class="c z">28h</span><span class="c f">Fg:</span><span class="c b">Bg:</span></div>
<div class="tr" style="top:810px"><i class="ar"></i><span class="c n">struct section_table_entry32_...</span><span class="c v">.ARM.attributes</span><span class="c s">1A60Ch</span><span class="c z">28h</span><span class="c f">Fg:</span><span class="c b">Bg:</span></div>
<div class="tr last" style="top:829px"><i class="ar"></i><span class="c n">struct section_table_entry32_...</span><span class="c v">.shstrtab</span><span class="c s">1A634h</span><span class="c z">28h</span><span class="c f">Fg:</span><span class="c b">Bg:</span></div>
<div class="vl" style="left:248px"></div>
<div class="vl" style="left:368px"></div>
<div class="vl" style="left:448px"></div>
<div class="vl" style="left:528px"></div>
<div class="vl" style="left:612px"></div>
<div class="vl" style="left:822px"></div>
<div class="abs" style="left:249px;top:715px;width:119px;height:18px;border:1px solid #45b2ee"></div>
<div id="redbox"></div>
<div id="status">Selected: 40 [28h] bytes (Range: 107844 [1A544h] to 107883 [1A56Bh])</div>
</body>
</html>
